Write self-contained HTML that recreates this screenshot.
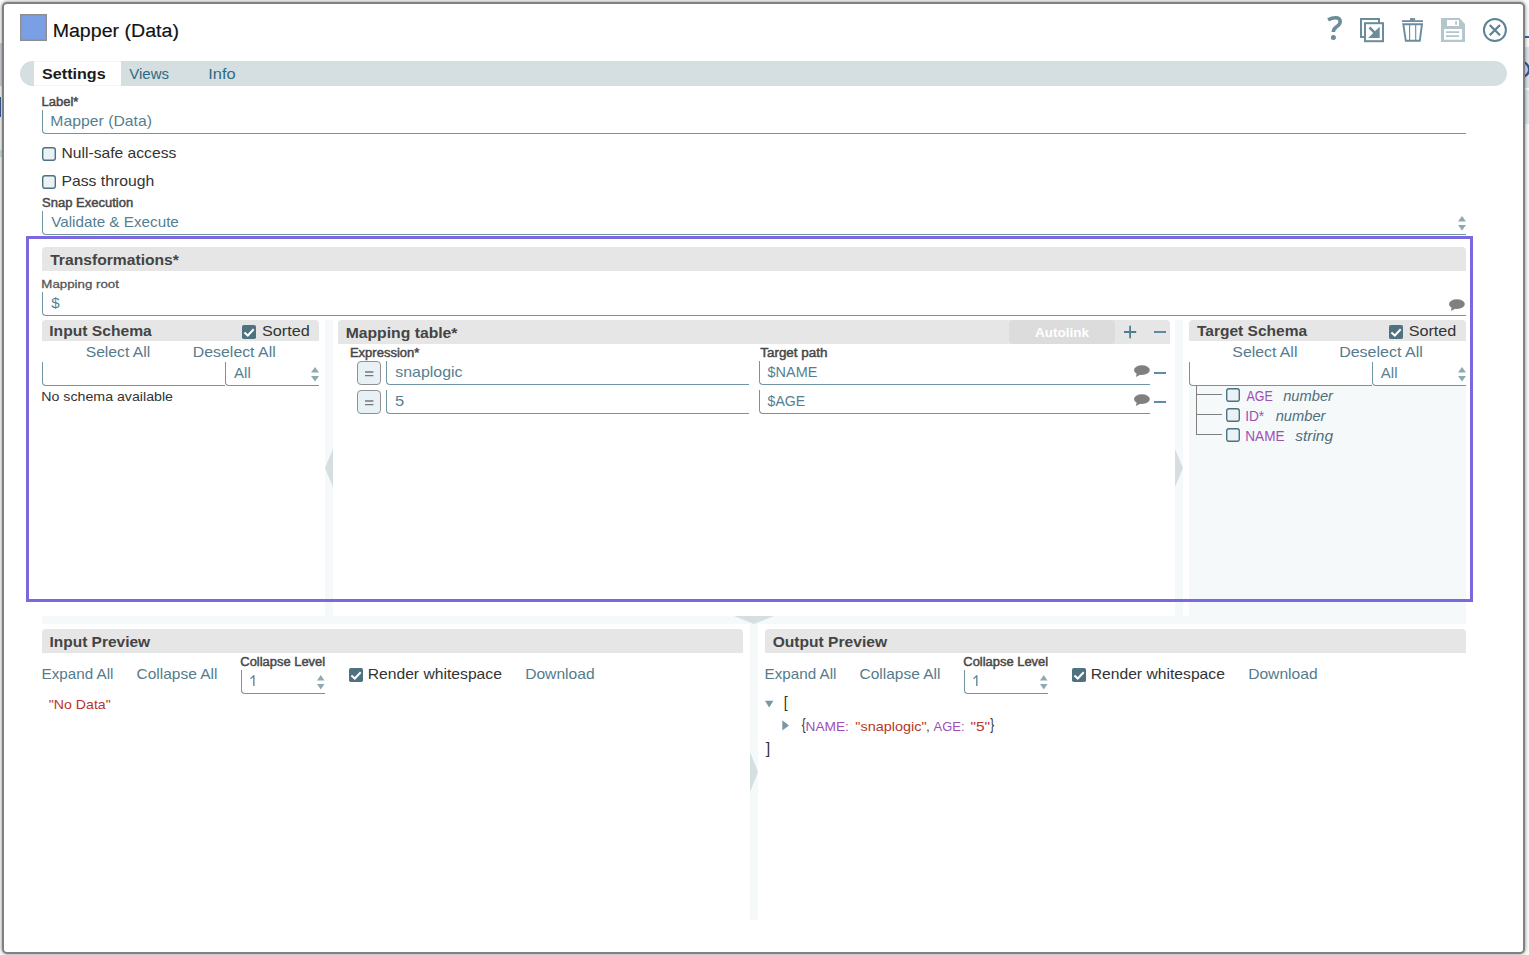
<!DOCTYPE html>
<html><head><meta charset="utf-8"><title>Mapper (Data)</title>
<style>
html,body{margin:0;padding:0;}
body{width:1529px;height:955px;position:relative;overflow:hidden;background:#fff;font-family:"Liberation Sans",sans-serif;}
.t{position:absolute;white-space:pre;line-height:24px;height:24px;transform-origin:0 50%;display:block;}
.r{position:absolute;box-sizing:border-box;}
svg{position:absolute;overflow:visible;}
</style></head><body>
<div class="r" style="left:1525px;top:36px;width:4px;height:2px;background:#3b62a8;"></div>
<div class="r" style="left:1525px;top:47px;width:4px;height:41px;background:#e1e5ed;"></div>
<div class="r" style="left:1525px;top:90px;width:4px;height:34px;background:#e6e9f0;"></div>
<svg style="left:0;top:0" width="1529" height="955"><circle cx="1521.5" cy="69.5" r="7.5" fill="none" stroke="#2f5597" stroke-width="2.2"/></svg>
<div class="r" style="left:0px;top:43px;width:2px;height:43px;background:#d4d8e0;"></div>
<div class="r" style="left:0px;top:97px;width:1px;height:20px;background:#3a5c9c;"></div>
<div class="r" style="left:0px;top:150px;width:2px;height:7px;background:#cfe8ee;"></div>
<div class="r" style="left:2px;top:2px;width:1523px;height:952px;background:#fff;border:2px solid #808080;border-radius:5px;box-shadow:0 0 4px rgba(0,0,0,0.5);"></div>
<svg style="left:20px;top:14px" width="27" height="27"><rect x="0.75" y="0.75" width="25.5" height="25.5" fill="#7a9fe4" stroke="#8e8e8e" stroke-width="1.5"/></svg>
<span class="t" style="left:52px;top:19px;font-size:18px;color:#111;transform:translateX(0.64px) scaleX(1.0884);-webkit-text-stroke:0.15px #111;">Mapper (Data)</span>
<div class="r" style="left:20px;top:61px;width:1487px;height:25px;background:#d5dfe2;border-radius:12.5px;"></div>
<div class="r" style="left:34px;top:61px;width:87px;height:25px;background:#fff;border-top:1px solid #f3f6f7;border-bottom:1px solid #f3f6f7;"></div>
<span class="t" style="left:42px;top:62px;font-size:14px;color:#1a1a1a;transform:translateX(0.07px) scaleX(1.1507);font-weight:bold;">Settings</span>
<span class="t" style="left:129px;top:62px;font-size:15px;color:#2f6a82;transform:translateX(0.24px) scaleX(1.0003);">Views</span>
<span class="t" style="left:208px;top:62px;font-size:15px;color:#2f6a82;transform:translateX(0.30px) scaleX(1.0927);">Info</span>
<span class="t" style="left:41px;top:90px;font-size:12px;color:#484848;transform:translateX(0.59px) scaleX(1.0808);-webkit-text-stroke:0.45px #484848;">Label*</span>
<div class="r" style="left:42px;top:110px;width:1424px;height:24px;background:transparent;border-left:1px solid #7095a5;border-bottom:1px solid #7095a5;border-bottom-left-radius:4px;"></div>
<span class="t" style="left:50px;top:109px;font-size:15px;color:#557f91;transform:translateX(0.35px) scaleX(1.0505);">Mapper (Data)</span>
<svg style="left:42px;top:147px" width="14" height="14" viewBox="0 0 14 14"><rect x="0.7" y="0.7" width="12.6" height="12.6" rx="2.2" fill="#eaf2f5" stroke="#4d7383" stroke-width="1.4"/></svg>
<span class="t" style="left:61px;top:141px;font-size:15px;color:#333;transform:translateX(0.46px) scaleX(1.0436);">Null-safe access</span>
<svg style="left:42px;top:175px" width="14" height="14" viewBox="0 0 14 14"><rect x="0.7" y="0.7" width="12.6" height="12.6" rx="2.2" fill="#eaf2f5" stroke="#4d7383" stroke-width="1.4"/></svg>
<span class="t" style="left:61px;top:169px;font-size:15px;color:#333;transform:translateX(0.45px) scaleX(1.0493);">Pass through</span>
<span class="t" style="left:42px;top:191px;font-size:12px;color:#484848;transform:translateX(0.06px) scaleX(1.0832);-webkit-text-stroke:0.45px #484848;">Snap Execution</span>
<div class="r" style="left:42px;top:211px;width:1424px;height:24px;background:transparent;border-left:1px solid #7095a5;border-bottom:1px solid #7095a5;border-bottom-left-radius:4px;"></div>
<span class="t" style="left:51px;top:210px;font-size:15px;color:#557f91;transform:translateX(0.14px) scaleX(1.0165);">Validate &amp; Execute</span>
<svg style="left:1458px;top:216px" width="8" height="14.5"><path d="M0 5.5 L4.0 0 L8 5.5 Z M0 9 L8 9 L4.0 14.5 Z" fill="#8fa9b3"/></svg>
<div class="r" style="left:325px;top:320px;width:8px;height:304px;background:#f5f9fa;"></div>
<div class="r" style="left:1175px;top:320px;width:8px;height:304px;background:#f5f9fa;"></div>
<div class="r" style="left:1189px;top:386px;width:277px;height:238px;background:#f5f9fa;"></div>
<div class="r" style="left:42px;top:616px;width:1424px;height:8px;background:#f5f9fa;"></div>
<div class="r" style="left:750px;top:624px;width:8px;height:296px;background:#f5f9fa;"></div>
<svg style="left:0;top:0" width="1529" height="955"><g fill="#d5dfe2"><path d="M333 449 L333 487 L325 468 Z"/><path d="M1175 449 L1175 487 L1183 468 Z"/><path d="M734 616 L774 616 L754 624 Z"/><path d="M750 752 L750 792 L758 772 Z"/></g></svg>
<div class="r" style="left:26px;top:236px;width:1447px;height:366px;background:transparent;border:3px solid #7b68de;"></div>
<div class="r" style="left:42px;top:247px;width:1424px;height:24px;background:#e6e6e6;border-radius:4px 4px 0 0;"></div>
<span class="t" style="left:50px;top:248px;font-size:15px;color:#444;transform:translateX(0.17px) scaleX(1.0437);font-weight:bold;">Transformations*</span>
<span class="t" style="left:41px;top:272px;font-size:11.5px;color:#555;transform:translateX(0.32px) scaleX(1.1554);-webkit-text-stroke:0.3px #555;">Mapping root</span>
<div class="r" style="left:42px;top:292px;width:1424px;height:24px;background:transparent;border-left:1px solid #7095a5;border-bottom:1px solid #7095a5;border-bottom-left-radius:4px;"></div>
<span class="t" style="left:51px;top:291px;font-size:15px;color:#557f91;transform:translateX(0.27px) scaleX(1.0125);">$</span>
<svg style="left:1449.2px;top:298.5px" width="16" height="12" viewBox="0 0 16 12"><ellipse cx="7.9" cy="5.1" rx="7.9" ry="4.9" fill="#808080"/><path d="M2.9 7.6 L1.9 11.9 L7.2 9.2 Z" fill="#808080"/></svg>
<div class="r" style="left:42px;top:320px;width:277px;height:21px;background:#e6e6e6;border-radius:4px 4px 0 0;"></div>
<span class="t" style="left:49px;top:319px;font-size:15px;color:#444;transform:translateX(0.26px) scaleX(1.0417);font-weight:bold;">Input Schema</span>
<svg style="left:242px;top:324.8px" width="14" height="14" viewBox="0 0 14 14"><rect x="0" y="0" width="14" height="14" rx="1.8" fill="#4f7280"/><path d="M2.4 7.5 L5.8 10.5 L11.7 4.2" fill="none" stroke="#fff" stroke-width="2"/></svg>
<span class="t" style="left:261px;top:319px;font-size:15px;color:#333;transform:translateX(0.92px) scaleX(1.0815);">Sorted</span>
<span class="t" style="left:85px;top:340px;font-size:15px;color:#557b8c;transform:translateX(0.65px) scaleX(1.0478);">Select All</span>
<span class="t" style="left:192px;top:340px;font-size:15px;color:#557b8c;transform:translateX(0.84px) scaleX(1.0570);">Deselect All</span>
<div class="r" style="left:42px;top:362px;width:183px;height:24px;background:transparent;border-left:1px solid #7095a5;border-bottom:1px solid #7095a5;border-bottom-left-radius:4px;"></div>
<div class="r" style="left:225px;top:362px;width:94px;height:24px;background:transparent;border-left:1px solid #7095a5;border-bottom:1px solid #7095a5;border-bottom-left-radius:4px;"></div>
<span class="t" style="left:234px;top:361px;font-size:15px;color:#557f91;transform:translateX(0.10px) scaleX(1.0008);">All</span>
<svg style="left:311.2px;top:367px" width="8" height="14.5"><path d="M0 5.5 L4.0 0 L8 5.5 Z M0 9 L8 9 L4.0 14.5 Z" fill="#8fa9b3"/></svg>
<span class="t" style="left:41px;top:385px;font-size:13.5px;color:#333;transform:translateX(0.28px) scaleX(1.0510);">No schema available</span>
<div class="r" style="left:338px;top:320px;width:832px;height:24px;background:#e6e6e6;border-radius:4px 4px 0 0;"></div>
<span class="t" style="left:345px;top:321px;font-size:15px;color:#444;transform:translateX(0.65px) scaleX(1.0484);font-weight:bold;">Mapping table*</span>
<div class="r" style="left:1009px;top:320px;width:106px;height:24px;background:#dcdcdc;border-radius:4px;"></div>
<span class="t" style="left:1034px;top:321px;font-size:13px;color:#fff;transform:translateX(0.98px) scaleX(1.0370);font-weight:bold;">Autolink</span>
<svg style="left:0;top:0" width="1529" height="955"><g stroke="#4d7f93" stroke-width="1.8" fill="none"><path d="M1124 332 H1136.2 M1130.1 325.8 V338.2"/><path d="M1154 332 H1166"/><path d="M1154 373 H1166"/><path d="M1154 402 H1166"/></g></svg>
<span class="t" style="left:349px;top:341px;font-size:12px;color:#484848;transform:translateX(0.88px) scaleX(1.0852);-webkit-text-stroke:0.45px #484848;">Expression*</span>
<span class="t" style="left:760px;top:341px;font-size:12px;color:#484848;transform:translateX(0.22px) scaleX(1.1192);-webkit-text-stroke:0.45px #484848;">Target path</span>
<div class="r" style="left:357px;top:361px;width:24px;height:24px;background:#e8f1f5;border:1px solid #909090;border-radius:4px;"></div>
<svg style="left:365px;top:371px" width="9" height="6"><path d="M0 1 H8.4 M0 4.6 H8.4" stroke="#777" stroke-width="1.35"/></svg>
<div class="r" style="left:386px;top:361px;width:363px;height:24px;background:transparent;border-left:1px solid #7095a5;border-bottom:1px solid #7095a5;border-bottom-left-radius:4px;"></div>
<span class="t" style="left:395px;top:360px;font-size:15px;color:#557f91;transform:translateX(0.20px) scaleX(1.0619);">snaplogic</span>
<div class="r" style="left:759px;top:361px;width:391px;height:24px;background:transparent;border-left:1px solid #7095a5;border-bottom:1px solid #7095a5;border-bottom-left-radius:4px;"></div>
<span class="t" style="left:767px;top:360px;font-size:15px;color:#557f91;transform:translateX(0.58px) scaleX(0.9620);">$NAME</span>
<svg style="left:1133.8px;top:365.3px" width="16" height="12" viewBox="0 0 16 12"><ellipse cx="7.9" cy="5.1" rx="7.9" ry="4.9" fill="#808080"/><path d="M2.9 7.6 L1.9 11.9 L7.2 9.2 Z" fill="#808080"/></svg>
<div class="r" style="left:357px;top:390px;width:24px;height:24px;background:#e8f1f5;border:1px solid #909090;border-radius:4px;"></div>
<svg style="left:365px;top:400px" width="9" height="6"><path d="M0 1 H8.4 M0 4.6 H8.4" stroke="#777" stroke-width="1.35"/></svg>
<div class="r" style="left:386px;top:390px;width:363px;height:24px;background:transparent;border-left:1px solid #7095a5;border-bottom:1px solid #7095a5;border-bottom-left-radius:4px;"></div>
<span class="t" style="left:394px;top:389px;font-size:15px;color:#557f91;transform:translateX(0.98px) scaleX(1.0991);">5</span>
<div class="r" style="left:759px;top:390px;width:391px;height:24px;background:transparent;border-left:1px solid #7095a5;border-bottom:1px solid #7095a5;border-bottom-left-radius:4px;"></div>
<span class="t" style="left:767px;top:389px;font-size:15px;color:#557f91;transform:translateX(0.58px) scaleX(0.9376);">$AGE</span>
<svg style="left:1133.8px;top:394.3px" width="16" height="12" viewBox="0 0 16 12"><ellipse cx="7.9" cy="5.1" rx="7.9" ry="4.9" fill="#808080"/><path d="M2.9 7.6 L1.9 11.9 L7.2 9.2 Z" fill="#808080"/></svg>
<div class="r" style="left:1189px;top:320px;width:277px;height:21px;background:#e6e6e6;border-radius:4px 4px 0 0;"></div>
<span class="t" style="left:1196px;top:319px;font-size:15px;color:#444;transform:translateX(0.97px) scaleX(1.0350);font-weight:bold;">Target Schema</span>
<svg style="left:1389.2px;top:325px" width="14" height="14" viewBox="0 0 14 14"><rect x="0" y="0" width="14" height="14" rx="1.8" fill="#4f7280"/><path d="M2.4 7.5 L5.8 10.5 L11.7 4.2" fill="none" stroke="#fff" stroke-width="2"/></svg>
<span class="t" style="left:1408px;top:319px;font-size:15px;color:#333;transform:translateX(0.63px) scaleX(1.0792);">Sorted</span>
<span class="t" style="left:1232px;top:340px;font-size:15px;color:#557b8c;transform:translateX(0.34px) scaleX(1.0545);">Select All</span>
<span class="t" style="left:1339px;top:340px;font-size:15px;color:#557b8c;transform:translateX(0.13px) scaleX(1.0675);">Deselect All</span>
<div class="r" style="left:1189px;top:362px;width:183px;height:24px;background:#fff;border-left:1px solid #7095a5;border-bottom:1px solid #7095a5;border-bottom-left-radius:4px;"></div>
<div class="r" style="left:1372px;top:362px;width:94px;height:24px;background:#fff;border-left:1px solid #7095a5;border-bottom:1px solid #7095a5;border-bottom-left-radius:4px;"></div>
<span class="t" style="left:1380px;top:361px;font-size:15px;color:#557f91;transform:translateX(0.80px) scaleX(1.0008);">All</span>
<svg style="left:1458px;top:367px" width="8" height="14.5"><path d="M0 5.5 L4.0 0 L8 5.5 Z M0 9 L8 9 L4.0 14.5 Z" fill="#8fa9b3"/></svg>
<svg style="left:0;top:0" width="1529" height="955"><path d="M1196.5 386 V434.5 M1196 394.5 H1222 M1196 414.5 H1222 M1196 434.5 H1222" stroke="#808080" stroke-width="1" fill="none"/></svg>
<svg style="left:1226px;top:388px" width="14" height="14" viewBox="0 0 14 14"><rect x="0.7" y="0.7" width="12.6" height="12.6" rx="2.2" fill="#eaf2f5" stroke="#4d7383" stroke-width="1.4"/></svg>
<span class="t" style="left:1246px;top:384px;font-size:14px;color:#a04fb4;transform:translateX(0.40px) scaleX(0.8897);">AGE</span>
<span class="t" style="left:1283px;top:384px;font-size:14px;color:#4f6f7c;transform:translateX(0.20px) scaleX(1.0478);font-style:italic;">number</span>
<svg style="left:1226px;top:408px" width="14" height="14" viewBox="0 0 14 14"><rect x="0.7" y="0.7" width="12.6" height="12.6" rx="2.2" fill="#eaf2f5" stroke="#4d7383" stroke-width="1.4"/></svg>
<span class="t" style="left:1245px;top:404px;font-size:14px;color:#a04fb4;transform:translateX(0.18px) scaleX(0.9778);">ID*</span>
<span class="t" style="left:1275px;top:404px;font-size:14px;color:#4f6f7c;transform:translateX(0.70px) scaleX(1.0478);font-style:italic;">number</span>
<svg style="left:1226px;top:428px" width="14" height="14" viewBox="0 0 14 14"><rect x="0.7" y="0.7" width="12.6" height="12.6" rx="2.2" fill="#eaf2f5" stroke="#4d7383" stroke-width="1.4"/></svg>
<span class="t" style="left:1245px;top:424px;font-size:14px;color:#a04fb4;transform:translateX(0.31px) scaleX(0.9703);">NAME</span>
<span class="t" style="left:1295px;top:424px;font-size:14px;color:#4f6f7c;transform:translateX(0.20px) scaleX(1.1077);font-style:italic;">string</span>
<div class="r" style="left:42px;top:629px;width:701px;height:24px;background:#e6e6e6;border-radius:4px 4px 0 0;"></div>
<span class="t" style="left:49px;top:630px;font-size:15px;color:#444;transform:translateX(0.47px) scaleX(1.0318);font-weight:bold;">Input Preview</span>
<span class="t" style="left:41px;top:662px;font-size:15px;color:#557b8c;transform:translateX(0.60px) scaleX(1.0138);">Expand All</span>
<span class="t" style="left:136px;top:662px;font-size:15px;color:#557b8c;transform:translateX(0.53px) scaleX(1.0315);">Collapse All</span>
<span class="t" style="left:240px;top:650px;font-size:12px;color:#484848;transform:translateX(0.29px) scaleX(1.0779);-webkit-text-stroke:0.45px #484848;">Collapse Level</span>
<div class="r" style="left:241px;top:670px;width:84px;height:24px;background:transparent;border-left:1px solid #7095a5;border-bottom:1px solid #7095a5;border-bottom-left-radius:4px;"></div>
<svg style="left:250px;top:675px" width="6" height="12"><path d="M0.1 3.4 L3.3 0.2 H4.5 V11 H3.2 V2.1 L0.9 4.3 Z" fill="#557f91"/></svg>
<svg style="left:317px;top:675px" width="7.5" height="14.5"><path d="M0 5.5 L3.75 0 L7.5 5.5 Z M0 9 L7.5 9 L3.75 14.5 Z" fill="#8fa9b3"/></svg>
<svg style="left:349px;top:668px" width="14" height="14" viewBox="0 0 14 14"><rect x="0" y="0" width="14" height="14" rx="1.8" fill="#4f7280"/><path d="M2.4 7.5 L5.8 10.5 L11.7 4.2" fill="none" stroke="#fff" stroke-width="2"/></svg>
<span class="t" style="left:367px;top:662px;font-size:15px;color:#333;transform:translateX(0.66px) scaleX(1.0453);">Render whitespace</span>
<span class="t" style="left:525px;top:662px;font-size:15px;color:#557b8c;transform:translateX(0.16px) scaleX(1.0409);">Download</span>
<div class="r" style="left:765px;top:629px;width:701px;height:24px;background:#e6e6e6;border-radius:4px 4px 0 0;"></div>
<span class="t" style="left:772px;top:630px;font-size:15px;color:#444;transform:translateX(0.72px) scaleX(1.0387);font-weight:bold;">Output Preview</span>
<span class="t" style="left:764px;top:662px;font-size:15px;color:#557b8c;transform:translateX(0.60px) scaleX(1.0138);">Expand All</span>
<span class="t" style="left:859px;top:662px;font-size:15px;color:#557b8c;transform:translateX(0.53px) scaleX(1.0315);">Collapse All</span>
<span class="t" style="left:963px;top:650px;font-size:12px;color:#484848;transform:translateX(0.29px) scaleX(1.0779);-webkit-text-stroke:0.45px #484848;">Collapse Level</span>
<div class="r" style="left:964px;top:670px;width:84px;height:24px;background:transparent;border-left:1px solid #7095a5;border-bottom:1px solid #7095a5;border-bottom-left-radius:4px;"></div>
<svg style="left:973px;top:675px" width="6" height="12"><path d="M0.1 3.4 L3.3 0.2 H4.5 V11 H3.2 V2.1 L0.9 4.3 Z" fill="#557f91"/></svg>
<svg style="left:1040px;top:675px" width="7.5" height="14.5"><path d="M0 5.5 L3.75 0 L7.5 5.5 Z M0 9 L7.5 9 L3.75 14.5 Z" fill="#8fa9b3"/></svg>
<svg style="left:1072px;top:668px" width="14" height="14" viewBox="0 0 14 14"><rect x="0" y="0" width="14" height="14" rx="1.8" fill="#4f7280"/><path d="M2.4 7.5 L5.8 10.5 L11.7 4.2" fill="none" stroke="#fff" stroke-width="2"/></svg>
<span class="t" style="left:1090px;top:662px;font-size:15px;color:#333;transform:translateX(0.66px) scaleX(1.0453);">Render whitespace</span>
<span class="t" style="left:1248px;top:662px;font-size:15px;color:#557b8c;transform:translateX(0.16px) scaleX(1.0409);">Download</span>
<span class="t" style="left:48px;top:693px;font-size:12.8px;color:#b93428;transform:translateX(0.85px) scaleX(1.1042);">&quot;No Data&quot;</span>
<svg style="left:0;top:0" width="1529" height="955"><g fill="#7a98a3"><path d="M765 700.7 L773.4 700.7 L769.2 707.5 Z"/><path d="M782.3 720.3 L789 725.4 L782.3 730.5 Z"/></g></svg>
<span class="t" style="left:783px;top:691px;font-size:16px;color:#333;transform:translateX(0.80px) scaleX(0.8923);">[</span>
<span class="t" style="left:801px;top:713px;font-size:16px;color:#333;transform:translateX(0.82px) scaleX(0.7273);">{</span>
<span class="t" style="left:805px;top:715px;font-size:13px;color:#a04fb4;transform:translateX(0.48px) scaleX(1.0555);">NAME:</span>
<span class="t" style="left:855px;top:715px;font-size:13px;color:#b93428;transform:translateX(0.35px) scaleX(1.1089);">&quot;snaplogic&quot;</span>
<span class="t" style="left:925px;top:715px;font-size:13px;color:#777;transform:translateX(0.36px) scaleX(1.4545);">,</span>
<span class="t" style="left:933px;top:715px;font-size:13px;color:#a04fb4;transform:translateX(0.60px) scaleX(0.9941);">AGE:</span>
<span class="t" style="left:970px;top:715px;font-size:13px;color:#b93428;transform:translateX(0.40px) scaleX(1.1919);">&quot;5&quot;</span>
<span class="t" style="left:990px;top:713px;font-size:16px;color:#333;transform:translateX(0.32px) scaleX(0.7273);">}</span>
<span class="t" style="left:765px;top:737px;font-size:16px;color:#333;transform:translateX(0.87px) scaleX(1.0039);">]</span>
<svg style="left:0;top:0" width="1529" height="955">
<g fill="none" stroke="#6a8c9c" stroke-width="2">
<rect x="1361" y="19" width="18" height="18"/>
<rect x="1365" y="23.2" width="18" height="18" fill="#fff"/>
</g>
<path d="M1379.7 26.7 L1379.7 37.9 L1368.3 37.9 L1373.2 33 L1368.6 28.4 L1370.4 26.6 L1375 31.2 Z" fill="#6a8c9c"/>
<g fill="none" stroke="#6a8c9c">
<path d="M1402 21.1 H1423" stroke-width="1.8"/>
<path d="M1410 18.1 H1415.1 V20.5 H1410 Z" fill="#6a8c9c" stroke="none"/>
<path d="M1403.3 24.2 H1422 L1419.8 40.8 H1405.8 Z" stroke-width="1.9"/>
<path d="M1409.6 25 V40 M1415.7 25 V40" stroke-width="1.1"/>
</g>
<path d="M1441 18 H1459.4 L1465 24 V42 H1441 Z M1447 20.1 V26 H1459 V20.1 Z M1444 29 V39.7 H1462.1 V29 Z" fill="#b3c5cd" fill-rule="evenodd"/>
<path d="M1455.2 21.2 H1457 V24.8 H1455.2 Z M1446 31.3 H1459.1 V33 H1446 Z M1446 35.3 H1459.1 V37 H1446 Z" fill="#b3c5cd"/>
<path d="M1328.1 19.9 C1331 18.3 1333.5 17.8 1335.5 17.8 C1338.5 17.8 1340.2 19.4 1340.2 21.8 C1340.2 24.5 1338 25.8 1336 27.2 C1334.2 28.5 1333.4 29.8 1333.3 32" fill="none" stroke="#6a8c9c" stroke-width="3.6"/>
<circle cx="1333.4" cy="37.6" r="2.5" fill="#6a8c9c"/>
<circle cx="1494.9" cy="30.1" r="11" fill="none" stroke="#5d8494" stroke-width="2"/>
<path d="M1489.7 25 L1500 35.3 M1500 25 L1489.7 35.3" stroke="#5d8494" stroke-width="2.3" fill="none"/>
</svg>
</body></html>
